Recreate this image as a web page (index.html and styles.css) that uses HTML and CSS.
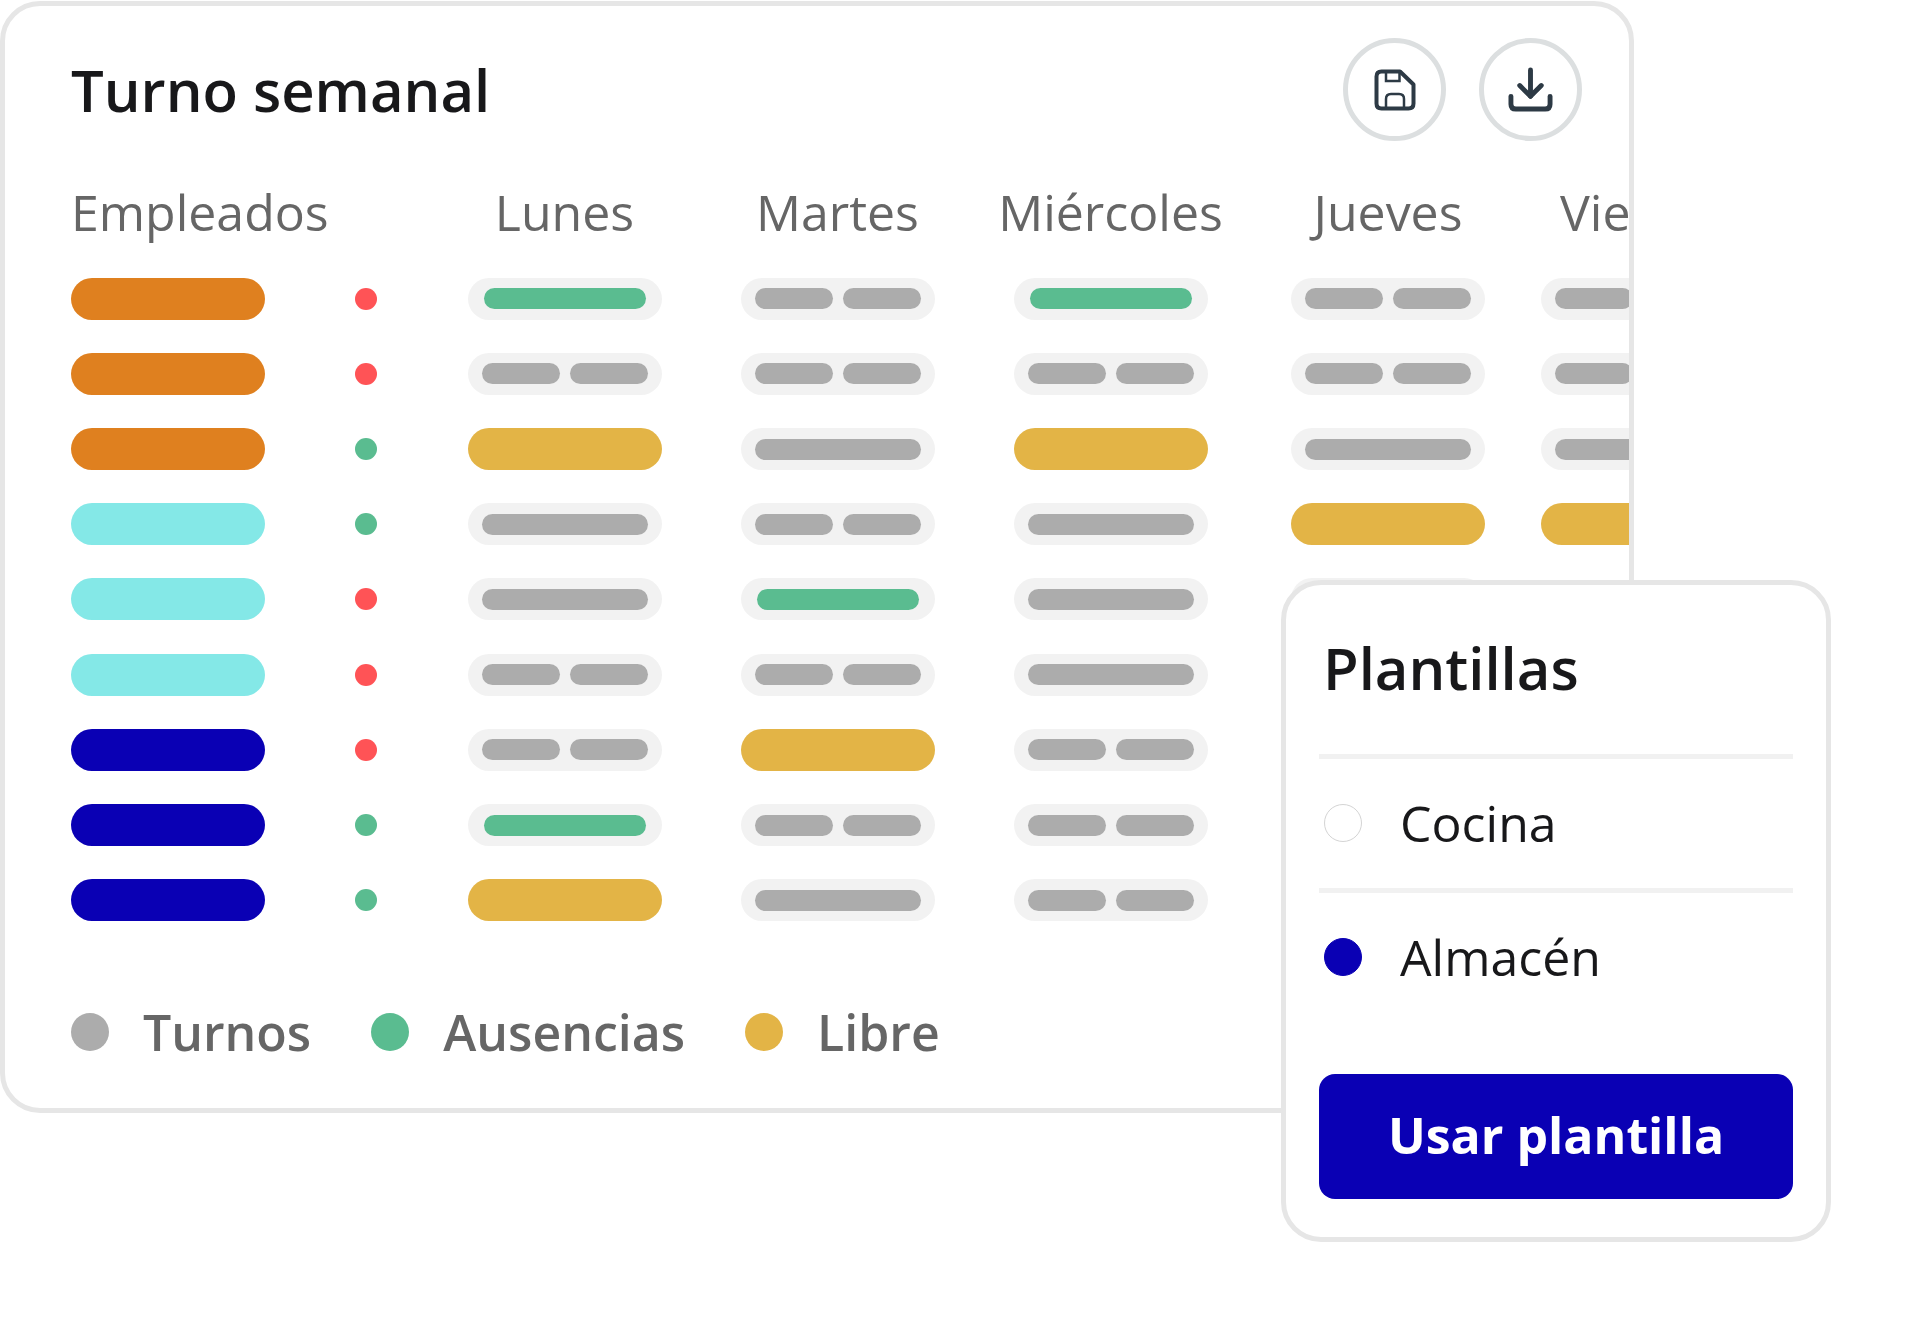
FILE: index.html
```html
<!DOCTYPE html>
<html lang="es">
<head>
    <meta charset="UTF-8">
    <meta name="viewport" content="width=device-width, initial-scale=1.0">
    <title>Turno semanal</title>
    <link rel="stylesheet" href="styles.css">
</head>
<body>
    <main class="board">
        <section class="card schedule">
            <header class="schedule-header">
                <h1 class="title">Turno semanal</h1>
                <div class="actions">
                    <button class="icon-btn" type="button" aria-label="Guardar">
                        <svg width="42" height="42" viewBox="0 0 42 42" fill="none" stroke="#2d3a45" stroke-linejoin="round">
                            <path d="M7.500 2.500H26L39.500 15.500V34.500Q39.500 39.500 34.500 39.500H7.500Q2.500 39.500 2.500 34.500V7.500Q2.500 2.500 7.500 2.500Z" stroke-width="4"/>
                            <path d="M12 3V12H25.500V3" stroke-width="2.500" stroke-linejoin="miter"/>
                            <path d="M12 39V30Q12 25 17 25H25Q30 25 30 30V39" stroke-width="2.500"/>
                        </svg>
                    </button>
                    <button class="icon-btn" type="button" aria-label="Descargar">
                        <svg width="45" height="45" viewBox="0 0 46 46" fill="none" stroke="#2d3a45" stroke-width="5" stroke-linecap="round" stroke-linejoin="round">
                            <path d="M23 3V30"/>
                            <path d="M12 19L23 30L34 19"/>
                            <path d="M3 30V38Q3 43 8 43H38Q43 43 43 38V30"/>
                        </svg>
                    </button>
                </div>
            </header>

            <table class="shifts">
                <colgroup>
                    <col class="col-employee">
                    <col class="col-status">
                    <col class="col-day">
                    <col class="col-day">
                    <col class="col-day">
                    <col class="col-thursday">
                    <col class="col-last">
                </colgroup>
                <thead>
                    <tr>
                        <th class="left" colspan="2">Empleados</th>
                        <th>Lunes</th>
                        <th>Martes</th>
                        <th>Miércoles</th>
                        <th>Jueves</th>
                        <th class="last">Vie</th>
                    </tr>
                </thead>
                <tbody>
                    <tr>
                        <td><div class="pill orange"></div></td>
                        <td><div class="dot red"></div></td>
                        <td><div class="pill absence"><i></i></div></td>
                        <td><div class="pill shift"><i></i><i></i></div></td>
                        <td><div class="pill absence"><i></i></div></td>
                        <td><div class="pill shift"><i></i><i></i></div></td>
                        <td><div class="pill shift"><i></i><i></i></div></td>
                    </tr>
                    <tr>
                        <td><div class="pill orange"></div></td>
                        <td><div class="dot red"></div></td>
                        <td><div class="pill shift"><i></i><i></i></div></td>
                        <td><div class="pill shift"><i></i><i></i></div></td>
                        <td><div class="pill shift"><i></i><i></i></div></td>
                        <td><div class="pill shift"><i></i><i></i></div></td>
                        <td><div class="pill shift"><i></i><i></i></div></td>
                    </tr>
                    <tr>
                        <td><div class="pill orange"></div></td>
                        <td><div class="dot green"></div></td>
                        <td><div class="pill free"></div></td>
                        <td><div class="pill shift"><i></i></div></td>
                        <td><div class="pill free"></div></td>
                        <td><div class="pill shift"><i></i></div></td>
                        <td><div class="pill shift"><i></i></div></td>
                    </tr>
                    <tr>
                        <td><div class="pill cyan"></div></td>
                        <td><div class="dot green"></div></td>
                        <td><div class="pill shift"><i></i></div></td>
                        <td><div class="pill shift"><i></i><i></i></div></td>
                        <td><div class="pill shift"><i></i></div></td>
                        <td><div class="pill free"></div></td>
                        <td><div class="pill free"></div></td>
                    </tr>
                    <tr>
                        <td><div class="pill cyan"></div></td>
                        <td><div class="dot red"></div></td>
                        <td><div class="pill shift"><i></i></div></td>
                        <td><div class="pill absence"><i></i></div></td>
                        <td><div class="pill shift"><i></i></div></td>
                        <td><div class="pill shift"><i></i></div></td>
                        <td></td>
                    </tr>
                    <tr>
                        <td><div class="pill cyan"></div></td>
                        <td><div class="dot red"></div></td>
                        <td><div class="pill shift"><i></i><i></i></div></td>
                        <td><div class="pill shift"><i></i><i></i></div></td>
                        <td><div class="pill shift"><i></i></div></td>
                        <td></td>
                        <td></td>
                    </tr>
                    <tr>
                        <td><div class="pill blue"></div></td>
                        <td><div class="dot red"></div></td>
                        <td><div class="pill shift"><i></i><i></i></div></td>
                        <td><div class="pill free"></div></td>
                        <td><div class="pill shift"><i></i><i></i></div></td>
                        <td></td>
                        <td></td>
                    </tr>
                    <tr>
                        <td><div class="pill blue"></div></td>
                        <td><div class="dot green"></div></td>
                        <td><div class="pill absence"><i></i></div></td>
                        <td><div class="pill shift"><i></i><i></i></div></td>
                        <td><div class="pill shift"><i></i><i></i></div></td>
                        <td></td>
                        <td></td>
                    </tr>
                    <tr>
                        <td><div class="pill blue"></div></td>
                        <td><div class="dot green"></div></td>
                        <td><div class="pill free"></div></td>
                        <td><div class="pill shift"><i></i></div></td>
                        <td><div class="pill shift"><i></i><i></i></div></td>
                        <td></td>
                        <td></td>
                    </tr>
                </tbody>
            </table>

            <ul class="legend">
                <li><span class="mark grey"></span>Turnos</li>
                <li><span class="mark green"></span>Ausencias</li>
                <li><span class="mark yellow"></span>Libre</li>
            </ul>
        </section>

        <form class="card templates">
            <h2 class="title">Plantillas</h2>
            <label class="option">
                <input type="radio" name="plantilla" value="cocina">
                Cocina
            </label>
            <label class="option">
                <input type="radio" name="plantilla" value="almacen" checked>
                Almacén
            </label>
            <button class="use-btn" type="button">Usar plantilla</button>
        </form>
    </main>
</body>
</html>
```

FILE: styles.css
```css
* {
    box-sizing: border-box;
}
body {
    margin: 0;
    background: #fff;
    color: #18181a;
    font-family: "Open Sans", "Noto Sans", sans-serif;
    font-size: 50px;
    line-height: 68px;
}
.board {
    position: relative;
    min-height: 100vh;
    padding: 1px 286px 0 0;
}
.card {
    background: #fff;
    border: 5px solid #e6e6e6;
    border-radius: 40px;
}
.title {
    margin: 0;
    font-size: 58px;
    font-weight: 600;
    line-height: 80px;
}

/* Weekly schedule */
.schedule {
    overflow: hidden;
    padding: 32px 0 42px 66px;
}
.schedule-header {
    display: flex;
    justify-content: space-between;
    align-items: center;
    padding-right: 47px;
}
.actions {
    display: flex;
    gap: 33px;
}
.icon-btn {
    display: flex;
    align-items: center;
    justify-content: center;
    width: 103px;
    height: 103px;
    padding: 0;
    background: #fff;
    border: 5px solid #dcdfe0;
    border-radius: 50%;
    cursor: pointer;
}
.shifts {
    width: 1676px;
    height: 778px;
    margin-top: 19px;
    border-spacing: 0;
    table-layout: fixed;
}
.col-employee {
    width: 233px;
}
.col-status {
    width: 124px;
}
.col-day {
    width: 273px;
}
.col-thursday {
    width: 282px;
}
.col-last {
    width: 218px;
}
.shifts th {
    height: 101px;
    padding: 2px 0 0;
    color: #666;
    font-weight: 400;
    text-align: center;
}
.shifts th.left {
    text-align: left;
}
.shifts th.last {
    padding-left: 31px;
    text-align: left;
}
.shifts td {
    padding: 0;
}
.pill {
    display: flex;
    align-items: center;
    gap: 10px;
    width: 194px;
    height: 42px;
    margin: 0 auto;
    padding: 0 14px;
    border-radius: 21px;
}
td:first-child .pill {
    margin: 0;
}
.pill i {
    flex: 1;
    height: 21px;
    border-radius: 11px;
}
.shift,
.absence {
    background: #f2f2f2;
}
.shift i {
    background: #acacac;
}
.absence {
    padding: 0 16px;
}
.absence i {
    background: #5abc90;
}
.free,
.yellow {
    background: #e3b446;
}
.orange {
    background: #df801f;
}
.cyan {
    background: #84e8e7;
}
.blue {
    background: #0a00b4;
}
.red {
    background: #ff5356;
}
.green {
    background: #5abc90;
}
.grey {
    background: #acacac;
}
.dot {
    width: 22px;
    height: 22px;
    margin: 0 auto;
    border-radius: 50%;
}
.legend {
    display: flex;
    gap: 60px;
    margin: 60px 0 0;
    padding: 0;
    list-style: none;
    color: #666;
    font-weight: 600;
}
.legend li {
    display: flex;
    align-items: center;
    gap: 34px;
}
.mark {
    width: 38px;
    height: 38px;
    border-radius: 50%;
}

/* Templates panel, floats over the corner of the schedule */
.templates {
    position: absolute;
    top: 580px;
    right: 89px;
    width: 550px;
    padding: 43px 33px 38px;
}
.templates .title {
    margin-bottom: 46px;
    padding-left: 4px;
}
.option {
    display: flex;
    align-items: center;
    gap: 38px;
    height: 134px;
    padding: 0 0 2px 5px;
    border-top: 5px solid #f1f1f1;
}
.option input {
    appearance: none;
    width: 38px;
    height: 38px;
    margin: 0;
    border: 1px solid #d4d4d4;
    border-radius: 50%;
}
.option input:checked {
    background: #0a00b4;
    border-color: #0a00b4;
}
.use-btn {
    display: block;
    width: 100%;
    height: 125px;
    margin-top: 52px;
    padding: 0 0 4px;
    background: #0a00b4;
    border: none;
    border-radius: 16px;
    color: #fff;
    font: inherit;
    font-weight: 700;
    cursor: pointer;
}
```
